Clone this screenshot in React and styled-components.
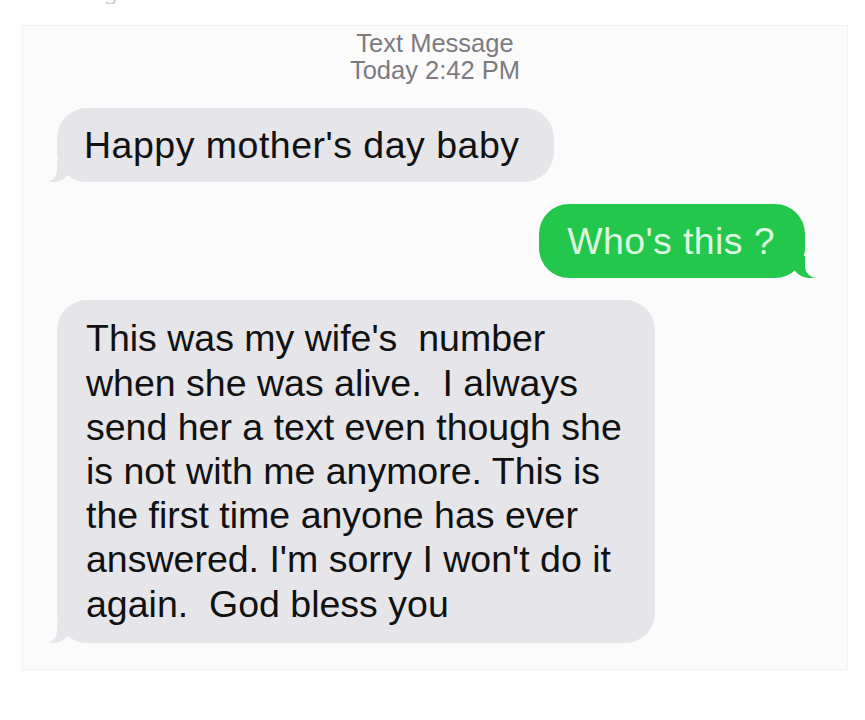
import React from "react";
import styled, { createGlobalStyle } from "styled-components";

const GlobalStyle = createGlobalStyle`
  html, body {
    margin: 0;
    padding: 0;
    background: #fefefe;
    font-family: "Liberation Sans", Arial, sans-serif;
  }
`;

const Page = styled.div`
  width: 865px;
  height: 720px;
  overflow: hidden;
`;

// bottom of a heading that was cut off when the screenshot was cropped
const CutStrip = styled.div`
  height: 4px;
  overflow: hidden;
  display: flex;
  align-items: flex-end;
  padding-left: 30px;
  color: #cfcfcf;
  font-size: 25px;
  line-height: 1;
  filter: blur(0.6px);
`;

const Card = styled.div`
  margin: 21px 17px 0 22px;
  background: #fbfbfc;
  border: 1px solid #f1f1f2;
  padding: 4px 0 26px;
  display: flex;
  flex-direction: column;
`;

const Header = styled.div`
  text-align: center;
  color: #7c7c80;
  font-size: 25.5px;
  line-height: 27px;
  margin-bottom: 24px;
`;

const Row = styled.div`
  display: flex;
  justify-content: ${(p) => (p.$me ? "flex-end" : "flex-start")};
  padding: ${(p) => (p.$me ? "0 42px 0 0" : "0 0 0 34px")};
  margin-bottom: ${(p) => (p.$last ? "0" : "22px")};
`;

const Bubble = styled.div`
  position: relative;
  background: ${(p) => (p.$me ? "#23c74b" : "#e5e5ea")};
  color: ${(p) => (p.$me ? "#dcf7e2" : "#111")};
  font-size: 37.5px;
  line-height: 44.2px;
  letter-spacing: ${(p) => p.$track || "0"};
  border-radius: 30px;
  padding: ${(p) => p.$pad || "15px 34px 15px 27px"};
  white-space: pre-wrap;

  &::before {
    content: "";
    position: absolute;
    bottom: 0;
    height: 22px;
    width: 26px;
    background: ${(p) => (p.$me ? "#23c74b" : "#e5e5ea")};
    ${(p) =>
      p.$me
        ? "right: -13px; border-bottom-left-radius: 18px 16px;"
        : "left: -12px; border-bottom-right-radius: 18px 16px;"}
  }

  &::after {
    content: "";
    position: absolute;
    bottom: 0;
    height: 22px;
    width: 30px;
    background: #fbfbfc;
    ${(p) =>
      p.$me
        ? "right: -30px; border-bottom-left-radius: 12px;"
        : "left: -30px; border-bottom-right-radius: 12px;"}
  }
`;

const longText = [
  "This was my wife's  number",
  "when she was alive.  I always",
  "send her a text even though she",
  "is not with me anymore. This is",
  "the first time anyone has ever",
  "answered. I'm sorry I won't do it",
  "again.  God bless you",
].join("\n");

export default function App() {
  return (
    <Page>
      <GlobalStyle />
      <CutStrip>Messages    Details</CutStrip>
      <Card>
        <Header>
          Text Message
          <br />
          Today 2:42 PM
        </Header>

        <Row>
          <Bubble $track="0.5px">Happy mother's day baby</Bubble>
        </Row>

        <Row $me>
          <Bubble $me $track="0.4px" $pad="15px 30px 15px 28px">
            Who's this ?
          </Bubble>
        </Row>

        <Row $last>
          <Bubble $pad="16px 33px 17px 29px">{longText}</Bubble>
        </Row>
      </Card>
    </Page>
  );
}
